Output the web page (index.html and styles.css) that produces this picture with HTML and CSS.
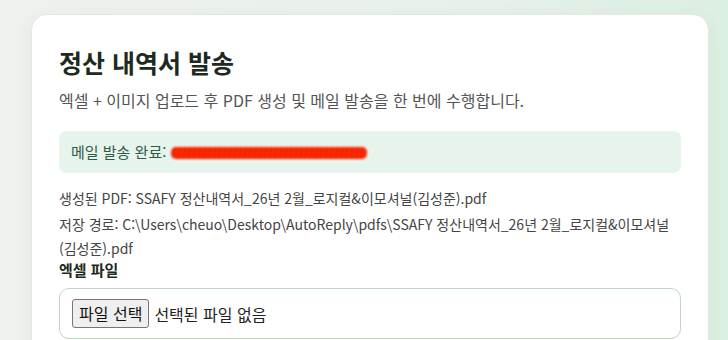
FILE: index.html
```html
<!DOCTYPE html>
<html lang="ko">
<head>
<meta charset="utf-8">
<title>정산 내역서 발송</title>
<link rel="stylesheet" href="styles.css">
</head>
<body>
<main class="card">
  <h1 class="title">정산 내역서 발송</h1>
  <p class="subtitle">엑셀 + 이미지 업로드 후 PDF 생성 및 메일 발송을 한 번에 수행합니다.</p>
  <div class="alert">메일 발송 완료: <span class="redact" aria-hidden="true"></span></div>
  <p class="info">생성된 PDF: SSAFY 정산내역서_26년 2월_로지컬&amp;이모셔널(김성준).pdf</p>
  <p class="info">저장 경로: C:\Users\cheuo\Desktop\AutoReply\pdfs\SSAFY 정산내역서_26년 2월_로지컬&amp;이모셔널(김성준).pdf</p>
  <label class="field-label" for="excel">엑셀 파일</label>
  <div class="file-box">
    <span class="file-btn">파일 선택</span>
    <span class="file-name">선택된 파일 없음</span>
  </div>
</main>
</body>
</html>
```

FILE: styles.css
```css
html, body {
  margin: 0;
  height: 100%;
}
body {
  background: linear-gradient(90deg, #eff1ee 0%, #e8f1ea 60%, #dcefe3 100%);
  font-family: "Noto Sans CJK KR", "Noto Sans", sans-serif;
  color: #333;
  padding: 14px 19px 0 31px;
  box-sizing: border-box;
  overflow: hidden;
}
.card {
  background: #fff;
  border-radius: 16px;
  border: 1px solid #e2e8e2;
  box-shadow: 0 4px 18px rgba(60, 80, 60, 0.06);
  padding: 30px 27px 40px 27px;
  height: 400px;
  box-sizing: border-box;
}
.title {
  margin: 0;
  font-size: 25px;
  line-height: 34px;
  font-weight: 700;
  color: #1d2a21;
}
.subtitle {
  margin: 9px 0 0;
  font-size: 16px;
  line-height: 24px;
  color: #555;
}
.alert {
  margin: 19px 0 0;
  background: #e6f4ec;
  border-radius: 8px;
  padding: 10px 12px;
  font-size: 15px;
  line-height: 22px;
  color: #2e5b48;
}
.redact {
  display: inline-block;
  width: 196px;
  height: 12px;
  vertical-align: -1px;
  background:
    repeating-linear-gradient(100deg, rgba(255, 60, 0, 0) 0 3px, rgba(220, 20, 0, 0.5) 3px 5px),
    #ff2a00;
  border-radius: 5px;
  filter: blur(0.8px);
}
.info {
  margin: 13px 0 0;
  font-size: 14px;
  line-height: 24px;
  color: #444;
}
.info + .info {
  margin-top: 2px;
}
.field-label {
  display: block;
  font-size: 15px;
  line-height: 20px;
  font-weight: 700;
  color: #1d2a21;
}
.file-box {
  margin-top: 8px;
  border: 1px solid #bfd6c2;
  border-radius: 10px;
  padding: 10px 12px;
  display: flex;
  align-items: center;
  gap: 5px;
  font-size: 16px;
}
.file-btn {
  background: #efefef;
  border: 1px solid #767676;
  border-radius: 3px;
  padding: 2px 6px;
  line-height: 23px;
  color: #111;
}
.file-name {
  color: #222;
}
```
